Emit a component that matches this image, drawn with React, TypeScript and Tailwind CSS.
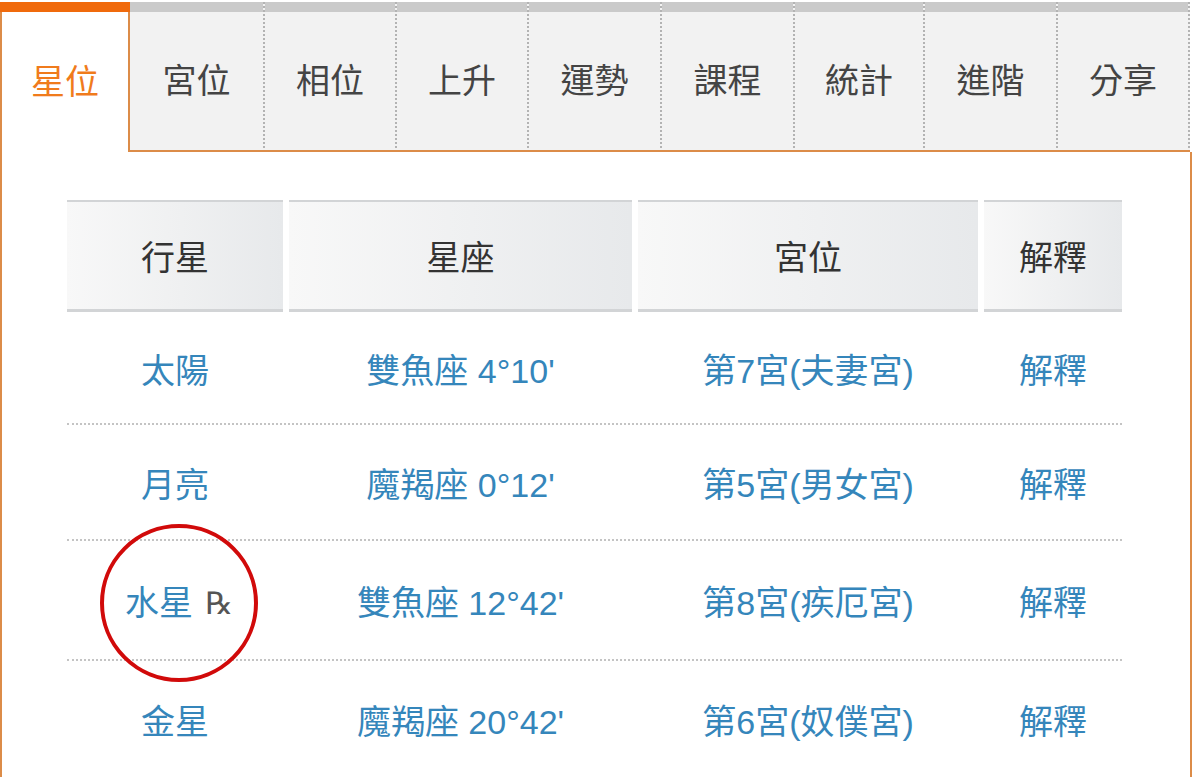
import React from 'react';

const tabs = [
  { label: '星位', w: 'w-[130px]' },
  { label: '宮位', w: 'w-[135px]' },
  { label: '相位', w: 'w-[132px]' },
  { label: '上升', w: 'w-[132px]' },
  { label: '運勢', w: 'w-[133px]' },
  { label: '課程', w: 'w-[133px]' },
  { label: '統計', w: 'w-[130px]' },
  { label: '進階', w: 'w-[133px]' },
  { label: '分享', w: 'w-[132px]' },
];

const rows = [
  { planet: '太陽', sign: "雙魚座 4°10'", house: '第7宮(夫妻宮)', h: 'h-[113px]' },
  { planet: '月亮', sign: "魔羯座 0°12'", house: '第5宮(男女宮)', h: 'h-[116px]' },
  { planet: '水星', retro: true, sign: "雙魚座 12°42'", house: '第8宮(疾厄宮)', h: 'h-[120px]' },
  { planet: '金星', sign: "魔羯座 20°42'", house: '第6宮(奴僕宮)', h: 'h-[116px]' },
];

const headCell =
  'flex items-center justify-center pt-[4px] border-t-2 border-b-[3px] border-[#d2d4d6] bg-gradient-to-r from-[#f8f8f8] to-[#e7e9eb] text-[#333]';

export default function App() {
  return (
    <div className="w-[1200px] h-[777px] overflow-hidden bg-white font-['Liberation_Sans','Noto_Sans_CJK_TC',sans-serif] text-[34px] leading-none">
      {/* tabs */}
      <div className="flex pt-[2px]">
        {tabs.map((t, i) =>
          i === 0 ? (
            <div key={t.label} className={`${t.w} h-[150px] flex flex-col bg-white border-l-2 border-r-2 border-[#dc8c48]`}>
              <div className="h-[10px] bg-[#f06a0c] -mx-[2px]" />
              <div className="flex-1 flex items-center justify-center text-[#f07b1c]">{t.label}</div>
            </div>
          ) : (
            <div key={t.label} className={`${t.w} h-[150px] flex flex-col bg-[#f2f2f2] border-r-2 border-dotted border-[#b3b3b3]`}>
              <div className="h-[10px] bg-[#cacaca]" />
              <div className="flex-1 flex items-center justify-center text-[#444]">{t.label}</div>
              <div className="h-[2px] bg-[#dc8c48] -mr-[2px]" />
            </div>
          )
        )}
      </div>

      {/* panel */}
      <div className="w-[1192px] h-[640px] border-l-2 border-r-2 border-[#dc8c48] pl-[65px] pt-[48px]">
        <div className="w-[1055px]">
          <div className="grid grid-cols-[216px_343px_340px_138px] gap-x-[6px] h-[112px]">
            <div className={headCell}>行星</div>
            <div className={headCell}>星座</div>
            <div className={headCell}>宮位</div>
            <div className={headCell}>解釋</div>
          </div>
          {rows.map((r, i) => (
            <div
              key={r.planet}
              className={`grid grid-cols-[216px_343px_340px_138px] gap-x-[6px] ${r.h} text-[#3586bb] ${
                i < rows.length - 1 ? 'border-b-2 border-dotted border-[#c4c4c4]' : ''
              }`}
            >
              <div className="relative flex items-center justify-center pt-[6px]">
                <span className={r.retro ? 'ml-[8px]' : ''}>{r.planet}</span>
                {r.retro && (
                  <>
                    <span className="ml-[12px] text-[#555] font-['DejaVu_Sans',sans-serif] text-[31px]">℞</span>
                    <div className="absolute left-[33px] top-[-17px] w-[158px] h-[158px] rounded-full border-[4px] border-[#d10a0a]" />
                  </>
                )}
              </div>
              <div className="flex items-center justify-center pt-[6px]">{r.sign}</div>
              <div className="flex items-center justify-center pt-[6px]">{r.house}</div>
              <div className="flex items-center justify-center pt-[6px]">解釋</div>
            </div>
          ))}
        </div>
      </div>
    </div>
  );
}
